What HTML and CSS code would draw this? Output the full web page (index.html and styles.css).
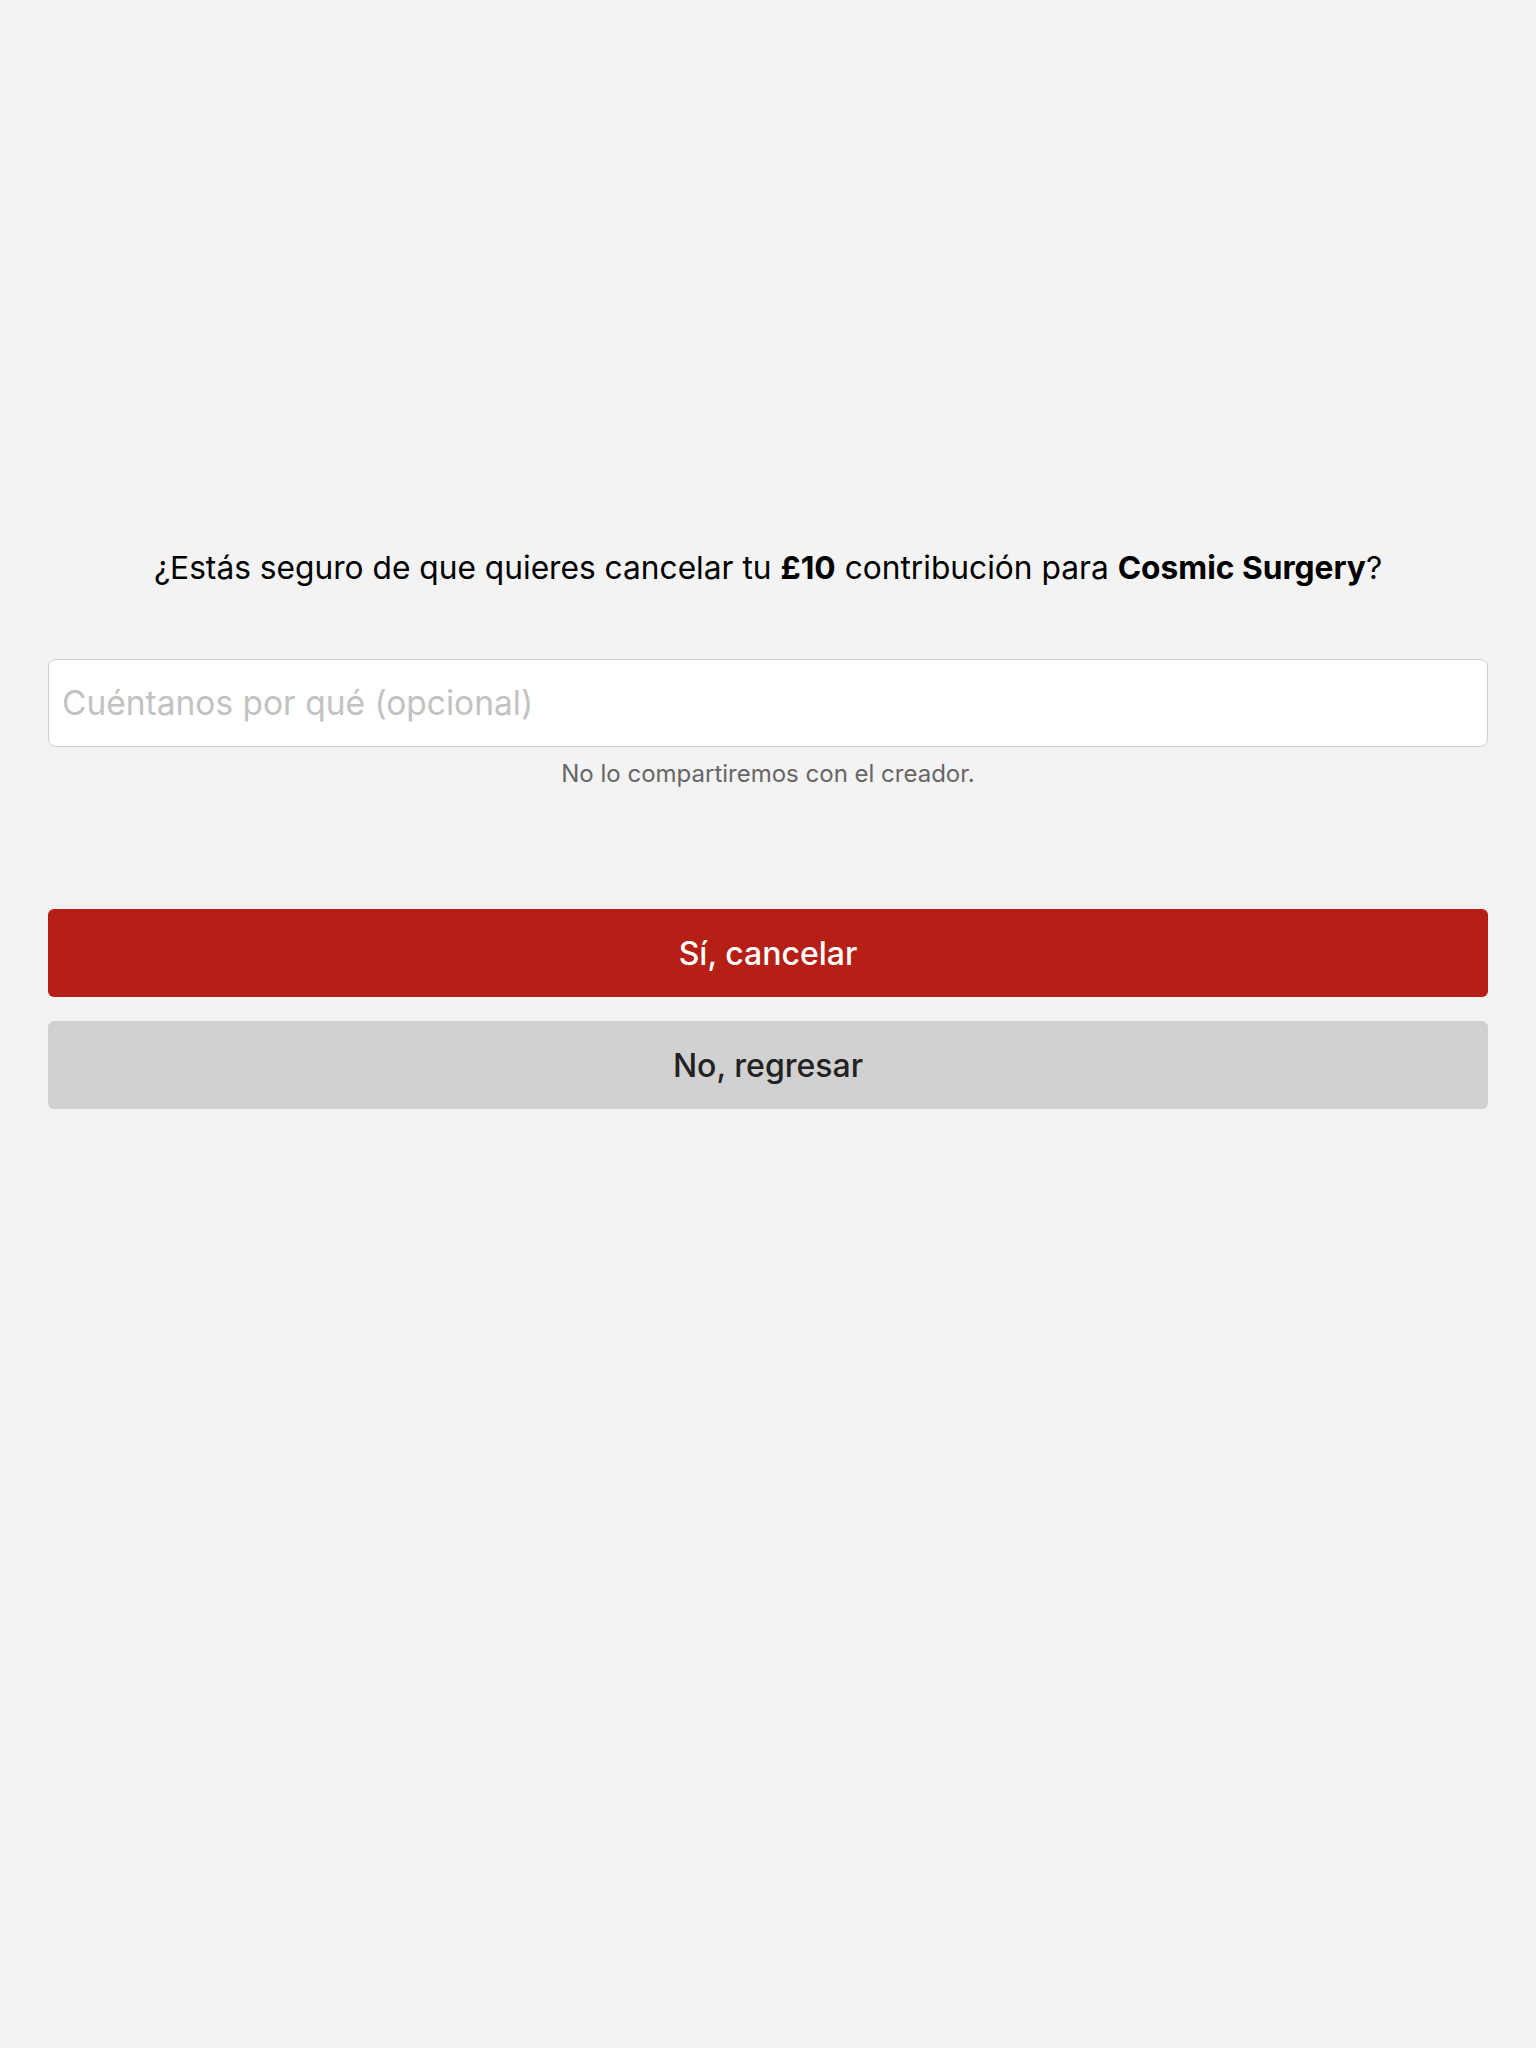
FILE: index.html
```html
<!DOCTYPE html>
<html lang="es">
<head>
<meta charset="utf-8">
<title>Cancelar contribución</title>
<link rel="stylesheet" href="styles.css">
</head>
<body>
<main class="page">
  <h1 class="question">¿Estás seguro de que quieres cancelar tu <strong>£10</strong> contribución para <strong>Cosmic Surgery</strong>?</h1>
  <div class="field">
    <input class="reason" type="text" placeholder="Cuéntanos por qué (opcional)">
    <p class="hint">No lo compartiremos con el creador.</p>
  </div>
  <div class="actions">
    <button class="btn btn-danger" type="button">Sí, cancelar</button>
    <button class="btn btn-secondary" type="button">No, regresar</button>
  </div>
</main>
</body>
</html>
```

FILE: styles.css
```css
html, body {
  margin: 0;
  padding: 0;
  background: #f3f3f3;
}
body {
  font-family: Inter, "Noto Sans", sans-serif;
  color: #000;
}
.page {
  padding: 548px 48px 0;
  display: flex;
  flex-direction: column;
}
.question {
  margin: 0;
  font-size: 31.7px;
  line-height: 40px;
  font-weight: 400;
  text-align: center;
  color: #000;
}
.question strong {
  font-weight: 700;
}
.field {
  margin-top: 71px;
  display: flex;
  flex-direction: column;
}
.reason {
  box-sizing: border-box;
  width: 100%;
  height: 88px;
  border: 1px solid #cfcfcf;
  border-radius: 8px;
  background: #fff;
  padding: 0 13px;
  font-family: Inter, "Noto Sans", sans-serif;
  font-size: 33.5px;
  color: #222;
  outline: none;
}
.reason::placeholder {
  color: #c2c2c2;
}
.hint {
  margin: 12px 0 0;
  font-size: 24px;
  line-height: 30px;
  text-align: center;
  color: #666;
}
.actions {
  margin-top: 120px;
  display: flex;
  flex-direction: column;
  gap: 24px;
}
.btn {
  height: 88px;
  border: none;
  border-radius: 6px;
  font-family: Inter, "Noto Sans", sans-serif;
  font-size: 32px;
  font-weight: 500;
  cursor: pointer;
}
.btn-danger {
  background: #b51f16;
  color: #fff;
}
.btn-secondary {
  background: #d1d1d1;
  color: #222;
}
```
